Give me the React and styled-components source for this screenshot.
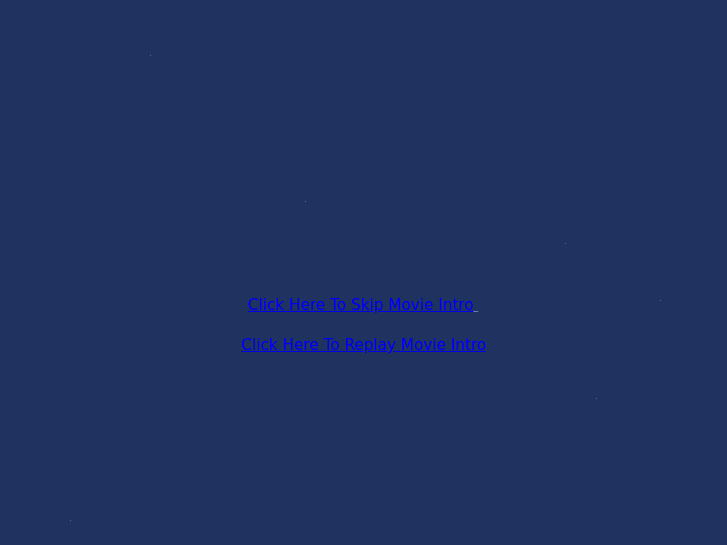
import styled, {createGlobalStyle} from 'styled-components'

const GlobalStyle = createGlobalStyle`
  html, body {
    margin: 0;
    padding: 0;
    background: #1f3260;
    font-family: "DejaVu Sans", sans-serif;
  }
`

const Page = styled.div`
  box-sizing: border-box;
  width: 100vw;
  height: 100vh;
  padding-top: 296px;
  background: #1f3260;
  display: flex;
  flex-direction: column;
  align-items: center;
  gap: 22px;
  position: relative;
  overflow: hidden;
`

const IntroLink = styled.a`
  font-size: 15.25px;
  line-height: 18px;
  color: #0000ee;
  text-decoration: underline;
`

const Spacer = styled.span`
  display: inline-block;
  width: 6px;
  color: #6a7fa8;
  text-decoration: underline;
`

const Star = styled.span`
  position: absolute;
  width: 1px;
  height: 1px;
  background: #4a6aa0;
`

const stars = [
  [305, 201], [565, 243], [596, 398], [150, 55], [660, 300], [70, 520],
]

const App = () => {
  return (
    <>
      <GlobalStyle />
      <Page>
        {stars.map(([x, y]) => (
          <Star key={`${x}-${y}`} style={{left: x, top: y}} />
        ))}
        <IntroLink href="#">Click Here To Skip Movie Intro<Spacer>&nbsp;</Spacer></IntroLink>
        <IntroLink href="#">Click Here To Replay Movie Intro</IntroLink>
      </Page>
    </>
  )
}

export default App
